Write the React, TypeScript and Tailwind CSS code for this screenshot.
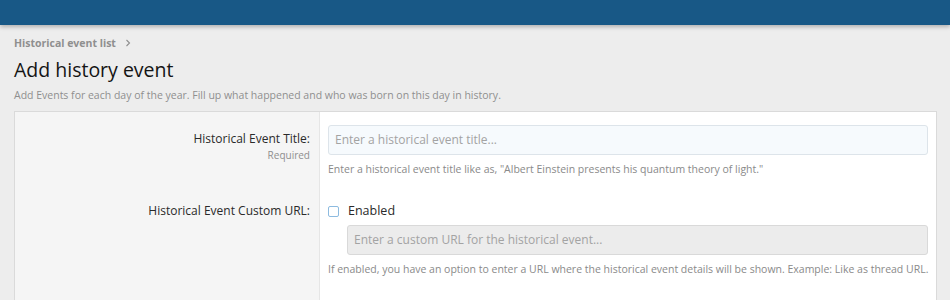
import React from "react";

export default function App() {
  return (
    <div
      className="w-[950px] h-[300px] overflow-hidden bg-[#ededed] text-[#141414]"
      style={{ fontFamily: '"Open Sans", "Noto Sans", sans-serif' }}
    >
      <div className="h-[25px] bg-[#185886] shadow-[0_2px_4px_rgba(0,0,0,0.25)]" />
      <div className="pl-[14px] pr-[13px]">
        <div className="mt-[11px] flex items-center gap-[6px] text-[10.5px] font-bold leading-[14px] text-[#8f8f8f]">
          <span>Historical event list</span>
          <svg width="6" height="8" viewBox="0 0 6 8" className="ml-[3px]">
            <path d="M1.5 1 L4.5 4 L1.5 7" fill="none" stroke="#8f8f8f" strokeWidth="1.1" />
          </svg>
        </div>
        <h1 className="mt-[7px] text-[19.5px] leading-[26px] text-[#141414]">Add history event</h1>
        <p className="mt-[5px] text-[10.5px] leading-[14px] text-[#8f8f8f]">
          Add Events for each day of the year. Fill up what happened and who was born on this day in history.
        </p>
        <div className="mt-[9px] border border-[#dadada] bg-white h-[200px] flex flex-col">
          <div className="flex">
            <div className="w-[305px] shrink-0 bg-[#f5f5f5] border-r border-[#e6e6e6] pt-[19px] pr-[9px] text-right">
              <div className="text-[12px] leading-[16px] text-[#2a2a2a]">Historical Event Title:</div>
              <div className="mt-[1px] text-[10px] leading-[14px] text-[#8f8f8f]">Required</div>
            </div>
            <div className="flex-1 pt-[13px] pl-[8px] pr-[8px] pb-[25px]">
              <div className="h-[30px] rounded-[3px] border border-[#dde4ea] bg-[#f6fafd] px-[6px] flex items-center text-[12px] text-[#a3a3a3]">
                Enter a historical event title...
              </div>
              <div className="mt-[7px] text-[10.5px] leading-[14px] text-[#8a8a8a]">
                Enter a historical event title like as, "Albert Einstein presents his quantum theory of light."
              </div>
            </div>
          </div>
          <div className="flex flex-1">
            <div className="w-[305px] shrink-0 bg-[#f5f5f5] border-r border-[#e6e6e6] pt-[1px] pr-[9px] text-right">
              <div className="text-[12px] leading-[18px] text-[#2a2a2a]">Historical Event Custom URL:</div>
            </div>
            <div className="flex-1 min-w-0 pt-[1px] pl-[8px] pr-[8px]">
              <div className="flex items-center h-[18px]">
                <div className="w-[11px] h-[11px] rounded-[2px] border-[1.5px] border-[#8dbbe0] bg-white" />
                <span className="ml-[9px] text-[12.5px] leading-[18px] text-[#2a2a2a]">Enabled</span>
              </div>
              <div className="ml-[19px] mt-[5px] h-[30px] rounded-[3px] border border-[#d9d9d9] bg-[#ececec] px-[6px] flex items-center text-[12px] text-[#a3a3a3]">
                Enter a custom URL for the historical event...
              </div>
              <div className="mt-[7px] whitespace-nowrap text-[10.5px] leading-[14px] text-[#8a8a8a]">
                If enabled, you have an option to enter a URL where the historical event details will be shown. Example: Like as thread URL.
              </div>
            </div>
          </div>
        </div>
      </div>
    </div>
  );
}
